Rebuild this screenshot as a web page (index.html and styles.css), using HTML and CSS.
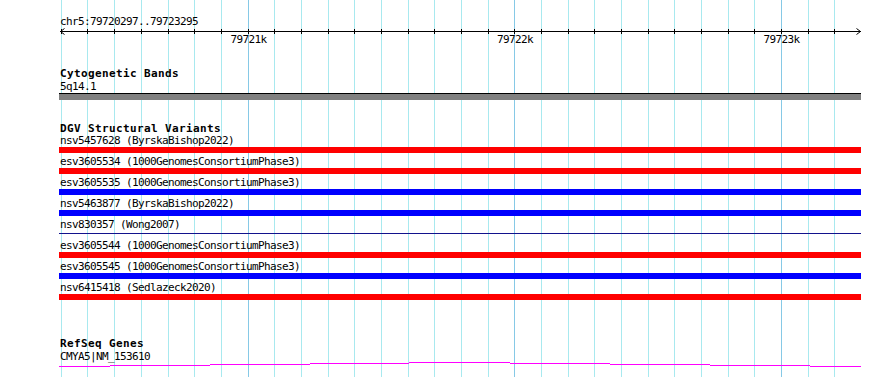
FILE: index.html
```html
<!DOCTYPE html>
<html lang="en">
<head>
<meta charset="utf-8">
<title>GBrowse tracks</title>
<link rel="stylesheet" href="styles.css">
</head>
<body>
<div class="page">
  <svg class="grid" width="890" height="377" viewBox="0 0 890 377" shape-rendering="crispEdges">
    <g class="minor">
      <rect x="61" y="0" width="1" height="377"/><rect x="87" y="0" width="1" height="377"/>
      <rect x="114" y="0" width="1" height="377"/><rect x="141" y="0" width="1" height="377"/>
      <rect x="168" y="0" width="1" height="377"/><rect x="194" y="0" width="1" height="377"/>
      <rect x="221" y="0" width="1" height="377"/><rect x="274" y="0" width="1" height="377"/>
      <rect x="301" y="0" width="1" height="377"/><rect x="328" y="0" width="1" height="377"/>
      <rect x="354" y="0" width="1" height="377"/><rect x="381" y="0" width="1" height="377"/>
      <rect x="408" y="0" width="1" height="377"/><rect x="434" y="0" width="1" height="377"/>
      <rect x="461" y="0" width="1" height="377"/><rect x="488" y="0" width="1" height="377"/>
      <rect x="541" y="0" width="1" height="377"/><rect x="568" y="0" width="1" height="377"/>
      <rect x="594" y="0" width="1" height="377"/><rect x="621" y="0" width="1" height="377"/>
      <rect x="648" y="0" width="1" height="377"/><rect x="674" y="0" width="1" height="377"/>
      <rect x="701" y="0" width="1" height="377"/><rect x="728" y="0" width="1" height="377"/>
      <rect x="754" y="0" width="1" height="377"/><rect x="808" y="0" width="1" height="377"/>
      <rect x="834" y="0" width="1" height="377"/>
    </g>
    <g class="major">
      <rect x="248" y="0" width="1" height="377"/>
      <rect x="514" y="0" width="1" height="377"/>
      <rect x="781" y="0" width="1" height="377"/>
    </g>
  </svg>

  <div class="content">
    <svg class="ruler" width="890" height="48" viewBox="0 0 890 48">
      <text class="rtext" x="60" y="25">chr5:79720297..79723295</text>
      <g class="axis" shape-rendering="crispEdges">
        <rect x="60" y="31" width="801" height="1"/>
        <rect x="61" y="29" width="1" height="5"/><rect x="87" y="29" width="1" height="5"/>
        <rect x="114" y="29" width="1" height="5"/><rect x="141" y="29" width="1" height="5"/>
        <rect x="168" y="29" width="1" height="5"/><rect x="194" y="29" width="1" height="5"/>
        <rect x="221" y="29" width="1" height="5"/><rect x="248" y="29" width="1" height="5"/>
        <rect x="274" y="29" width="1" height="5"/><rect x="301" y="29" width="1" height="5"/>
        <rect x="328" y="29" width="1" height="5"/><rect x="354" y="29" width="1" height="5"/>
        <rect x="381" y="29" width="1" height="5"/><rect x="408" y="29" width="1" height="5"/>
        <rect x="434" y="29" width="1" height="5"/><rect x="461" y="29" width="1" height="5"/>
        <rect x="488" y="29" width="1" height="5"/><rect x="514" y="29" width="1" height="5"/>
        <rect x="541" y="29" width="1" height="5"/><rect x="568" y="29" width="1" height="5"/>
        <rect x="594" y="29" width="1" height="5"/><rect x="621" y="29" width="1" height="5"/>
        <rect x="648" y="29" width="1" height="5"/><rect x="674" y="29" width="1" height="5"/>
        <rect x="701" y="29" width="1" height="5"/><rect x="728" y="29" width="1" height="5"/>
        <rect x="754" y="29" width="1" height="5"/><rect x="781" y="29" width="1" height="5"/>
        <rect x="808" y="29" width="1" height="5"/><rect x="834" y="29" width="1" height="5"/>
      </g>
      <polyline class="arrow" points="64.5,28.5 60.5,31.5 64.5,34.5"/>
      <polyline class="arrow" points="856.5,28.5 860.5,31.5 856.5,34.5"/>
      <text class="rtext" x="248.5" y="43" text-anchor="middle">79721k</text>
      <text class="rtext" x="515" y="43" text-anchor="middle">79722k</text>
      <text class="rtext" x="781.5" y="43" text-anchor="middle">79723k</text>
    </svg>

    <section class="track cyto">
      <div class="title">Cytogenetic Bands</div>
      <div class="label">5q14.1</div>
      <div class="band"></div>
    </section>

    <section class="track dgv">
      <div class="title">DGV Structural Variants</div>
      <div class="feature"><div class="flabel">nsv5457628 (ByrskaBishop2022)</div><div class="bar red"></div></div>
      <div class="feature"><div class="flabel">esv3605534 (1000GenomesConsortiumPhase3)</div><div class="bar red"></div></div>
      <div class="feature"><div class="flabel">esv3605535 (1000GenomesConsortiumPhase3)</div><div class="bar blue"></div></div>
      <div class="feature"><div class="flabel">nsv5463877 (ByrskaBishop2022)</div><div class="bar blue"></div></div>
      <div class="feature"><div class="flabel">nsv830357 (Wong2007)</div><div class="bar thin"></div></div>
      <div class="feature"><div class="flabel">esv3605544 (1000GenomesConsortiumPhase3)</div><div class="bar red"></div></div>
      <div class="feature"><div class="flabel">esv3605545 (1000GenomesConsortiumPhase3)</div><div class="bar blue"></div></div>
      <div class="feature"><div class="flabel">nsv6415418 (Sedlazeck2020)</div><div class="bar red"></div></div>
    </section>

    <section class="track refseq">
      <div class="title">RefSeq Genes</div>
      <div class="label">CMYA5|NM_153610</div>
      <svg class="gene" width="890" height="8" viewBox="0 0 890 8" shape-rendering="crispEdges">
        <rect x="59" y="6" width="51" height="1"/>
        <rect x="110" y="5" width="100" height="1"/>
        <rect x="210" y="4" width="100" height="1"/>
        <rect x="310" y="3" width="99" height="1"/>
        <rect x="409" y="2" width="101" height="1"/>
        <rect x="510" y="3" width="100" height="1"/>
        <rect x="610" y="4" width="100" height="1"/>
        <rect x="710" y="5" width="100" height="1"/>
        <rect x="810" y="6" width="51" height="1"/>
      </svg>
    </section>
  </div>
</div>
</body>
</html>
```

FILE: styles.css
```css
html, body {
  margin: 0;
  padding: 0;
  background: #ffffff;
}

.page {
  position: relative;
  width: 890px;
  height: 377px;
  overflow: hidden;
  background: #ffffff;
  font-family: "DejaVu Sans Mono", "Liberation Mono", monospace;
  font-size: 11px;
  color: #000000;
}

.grid {
  position: absolute;
  top: 0;
  left: 0;
  z-index: 0;
}

.grid .minor rect { fill: #a8e9ef; }
.grid .major rect { fill: #86c9e6; }

.content {
  position: relative;
  z-index: 1;
}

.ruler {
  display: block;
}

.rtext {
  font-family: "DejaVu Sans Mono", "Liberation Mono", monospace;
  font-size: 11px;
  letter-spacing: -0.62px;
  fill: #000000;
}

.axis rect { fill: #000000; }

.arrow {
  fill: none;
  stroke: #000000;
  stroke-width: 1;
}

.track {
  display: flex;
  flex-direction: column;
}

.title {
  font-weight: bold;
  line-height: 13px;
  height: 13px;
  letter-spacing: 0.38px;
  padding-left: 60px;
  white-space: nowrap;
}

.label {
  line-height: 13px;
  height: 13px;
  letter-spacing: -0.62px;
  padding-left: 60px;
  white-space: nowrap;
}

.cyto { margin-top: 19px; }

.band {
  margin-left: 59px;
  width: 802px;
  height: 6px;
  border-top: 1px solid #000000;
  background: #808080;
}

.dgv { margin-top: 22px; }

.feature {
  display: flex;
  flex-direction: column;
}

.flabel {
  line-height: 12px;
  height: 12px;
  letter-spacing: -0.62px;
  padding-left: 60px;
  white-space: nowrap;
}

.bar {
  margin-left: 59px;
  width: 802px;
  height: 6px;
  margin-bottom: 3px;
}

.bar.red { background: #ff0000; }
.bar.blue { background: #0000ff; }

.bar.thin {
  height: 1px;
  margin-top: 2px;
  margin-bottom: 6px;
  background: #12128c;
}

.refseq { margin-top: 34px; }

.gene {
  display: block;
  margin-top: -3px;
}

.gene rect { fill: #ff00ff; }
```
